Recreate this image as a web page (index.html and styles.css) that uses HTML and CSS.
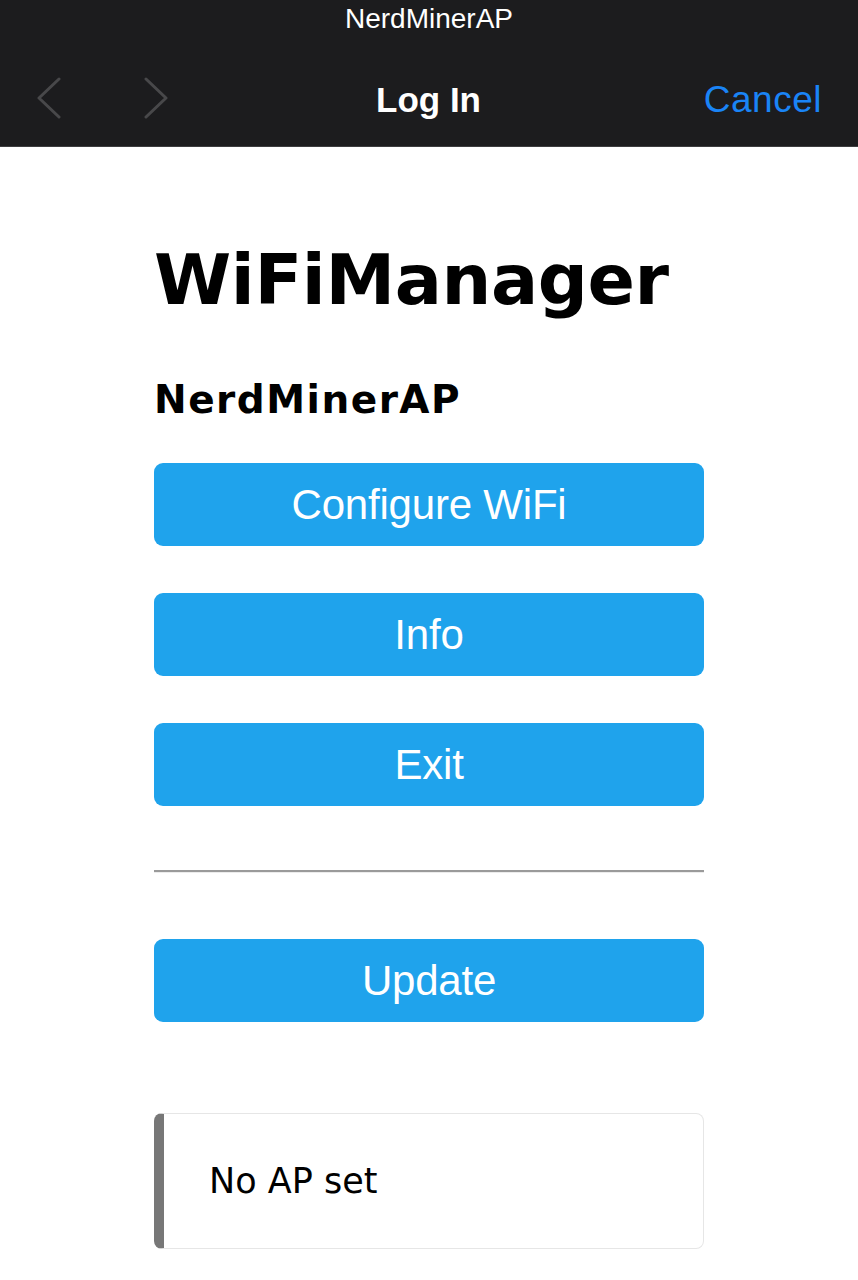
FILE: index.html
```html
<!DOCTYPE html>
<html lang="en">
<head>
<meta charset="utf-8">
<title>Log In</title>
<link rel="stylesheet" href="styles.css">
</head>
<body>
<header class="nav">
  <div class="nav-title">NerdMinerAP</div>
  <div class="nav-bar">
    <div class="nav-arrows">
      <svg class="chev" width="26" height="42" viewBox="0 0 26 42"><polyline points="23,2 3,21 23,40" fill="none" stroke="#48484a" stroke-width="3" stroke-linecap="round" stroke-linejoin="round"/></svg>
      <svg class="chev" width="26" height="42" viewBox="0 0 26 42"><polyline points="3,2 23,21 3,40" fill="none" stroke="#48484a" stroke-width="3" stroke-linecap="round" stroke-linejoin="round"/></svg>
    </div>
    <div class="nav-heading">Log In</div>
    <div class="nav-cancel">Cancel</div>
  </div>
</header>
<main class="wrap">
  <h1 class="title">WiFiManager</h1>
  <h3 class="subtitle">NerdMinerAP</h3>
  <div class="menu">
    <button class="btn">Configure WiFi</button>
    <button class="btn">Info</button>
    <button class="btn">Exit</button>
  </div>
  <hr class="sep">
  <button class="btn">Update</button>
  <div class="msg">No AP set</div>
</main>
</body>
</html>
```

FILE: styles.css
```css
html, body {
  margin: 0;
  padding: 0;
  background: #ffffff;
}

body {
  font-family: "DejaVu Sans", Verdana, sans-serif;
  color: #000;
}

.nav {
  background: #1c1c1e;
  height: 147px;
  box-sizing: border-box;
  border-bottom: 1px solid #3d3d3f;
  display: flex;
  flex-direction: column;
  padding-top: 3px;
  font-family: "Liberation Sans", Arial, sans-serif;
}

.nav-title {
  text-align: center;
  color: #ffffff;
  font-size: 28px;
  line-height: 32px;
}

.nav-bar {
  margin-top: 43px;
  height: 44px;
  display: grid;
  grid-template-columns: 1fr auto 1fr;
  align-items: center;
  padding: 0 37px 0 36px;
}

.nav-arrows {
  display: flex;
  align-items: center;
  gap: 81px;
  margin-top: -4px;
}

.chev {
  display: block;
}

.nav-heading {
  color: #ffffff;
  font-size: 35px;
  font-weight: bold;
  line-height: 44px;
}

.nav-cancel {
  justify-self: end;
  color: #1a84f6;
  font-size: 37px;
  line-height: 44px;
  margin-right: -1px;
  letter-spacing: 0.5px;
}

.wrap {
  width: 550px;
  margin: 0 auto;
  display: flex;
  flex-direction: column;
}

.title {
  margin: 91px 0 0 0;
  font-size: 70px;
  line-height: 84px;
  font-weight: bold;
  letter-spacing: -0.4px;
}

.subtitle {
  margin: 55px 0 0 0;
  font-size: 39px;
  line-height: 46px;
  font-weight: bold;
  letter-spacing: 1.5px;
}

.menu {
  margin-top: 40px;
  display: flex;
  flex-direction: column;
  gap: 47px;
}

.btn {
  display: flex;
  align-items: center;
  justify-content: center;
  width: 100%;
  height: 83px;
  border: 0;
  border-radius: 9px;
  background: #1fa3ec;
  color: #ffffff;
  font-family: "Liberation Sans", Arial, sans-serif;
  font-size: 42px;
  letter-spacing: -0.2px;
  padding: 0;
}

.sep {
  margin: 64px 0 66px 0;
  border: 0;
  border-top: 2px solid #9a9a9a;
  border-bottom: 1px solid #ececec;
  height: 0;
}

.msg {
  margin-top: 91px;
  border: 1px solid #e6e6e6;
  border-left: 10px solid #777777;
  border-radius: 8px;
  padding: 47px 20px 47px 45px;
  font-size: 35px;
  line-height: 40px;
}
```
